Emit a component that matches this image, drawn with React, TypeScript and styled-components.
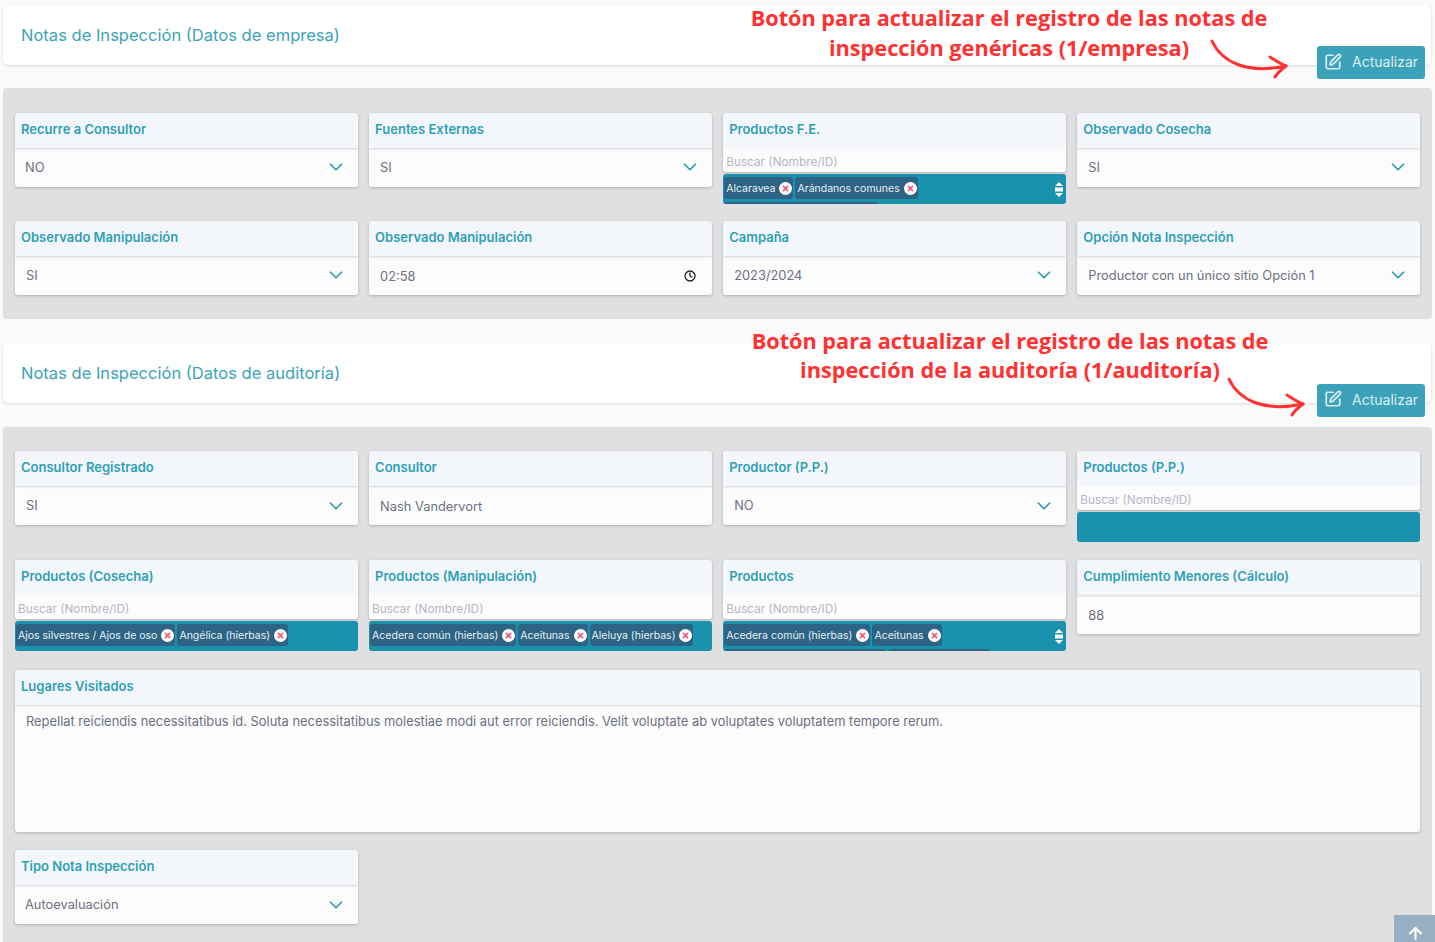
import React from 'react';
import styled, { createGlobalStyle } from 'styled-components';
import { ChevronDown, Clock, SquarePen, ArrowUp } from 'lucide-react';

const Global = createGlobalStyle`
  html, body { margin: 0; padding: 0; height: 942px; overflow: hidden; background: #fafafa; }
  * { box-sizing: border-box; }
  body { font-family: Inter, "Liberation Sans", sans-serif; }
`;

const Page = styled.div`
  height: 942px;
  overflow: hidden;
  padding: 5px 3px 0;
  display: flex;
  flex-direction: column;
  gap: 24px;
`;
const Section = styled.section<{ $gap: number }>`
  position: relative;
  display: flex;
  flex-direction: column;
  gap: ${p => p.$gap}px;
`;
const HeaderCard = styled.header`
  height: 60px;
  width: 1428px;
  padding: 0 6px 0 18px;
  background: #fff;
  border-radius: 5px;
  box-shadow: 0 1px 3px rgba(0, 0, 0, 0.14);
  display: flex;
  align-items: center;
  justify-content: space-between;
`;
const Title = styled.h2`
  margin: 0;
  font-size: 16.55px;
  font-weight: 400;
  color: #3ba3b9;
`;
const UpdateButton = styled.button`
  align-self: flex-end;
  margin-bottom: -14px;
  width: 108px;
  height: 33px;
  border: 0;
  border-radius: 3px;
  padding: 0 0 2px 7px;
  background: #3ba2b9;
  color: #dcedf1;
  font: 400 14px Inter, "Liberation Sans", sans-serif;
  display: flex;
  align-items: center;
  gap: 10px;
  position: relative;
  z-index: 2;
`;
const Panel = styled.div<{ $gap: number }>`
  width: 1429px;
  background: #e0e0e0;
  border-radius: 4px;
  padding: 24.5px 12px 24px;
  display: grid;
  grid-template-columns: repeat(4, minmax(0, 1fr));
  column-gap: 11.4px;
  row-gap: ${p => p.$gap}px;
  align-items: start;
  box-shadow: 0 0 2px rgba(0, 0, 0, 0.06);
`;
const Field = styled.div<{ $wide?: boolean }>`
  ${p => (p.$wide ? 'grid-column: 1 / -1; margin-top: 1px;' : '')}
  display: flex;
  flex-direction: column;
`;
const FieldTop = styled.div`
  border-radius: 3px;
  overflow: hidden;
  box-shadow: 0 1px 3px rgba(0, 0, 0, 0.22);
`;
const Label = styled.div<{ $soft?: boolean }>`
  height: 35px;
  padding: 0 6px;
  background: #f3f7fb;
  color: #2f9fb6;
  font-size: 13px;
  font-weight: 600;
  line-height: 33px;
  position: relative;
  box-shadow: ${p => (p.$soft ? 'none' : '0 1px 2px rgba(0, 0, 0, 0.16)')};
`;
const ValueRow = styled.div<{ $input?: boolean; $pad?: number }>`
  height: 39px;
  background: #fcfcfc;
  padding: ${p => (p.$input ? '2px' : '0')} 11px 0 ${p => p.$pad ?? 11}px;
  display: flex;
  align-items: center;
  justify-content: space-between;
  color: #6e7080;
  font-size: 12.85px;
  font-weight: 400;
  svg { flex: none; }
`;
const SearchRow = styled.div`
  height: 24px;
  background: #fcfcfc;
  padding: 2px 3px 0;
  color: #b6b6c4;
  font-size: 11.8px;
  line-height: 24px;
`;
const TextBody = styled.div`
  height: 127px;
  background: #fcfcfc;
  padding: 8px 11px;
  color: #6e7080;
  font-size: 12.9px;
  line-height: 17px;
`;
const ChipBox = styled.div`
  position: relative;
  height: 30px;
  margin-top: 2px;
  padding: 3px 1px 0;
  background: #1a91ad;
  border-radius: 3px;
  overflow: hidden;
  display: flex;
  flex-wrap: wrap;
  align-content: flex-start;
  gap: 0 2px;
`;
const Chip = styled.span`
  height: 22px;
  margin-bottom: 3px;
  padding: 1px 1px 0 2px;
  background: #2d6385;
  border-radius: 3px;
  color: #e8f1f4;
  font-size: 10.5px;
  display: inline-flex;
  align-items: center;
  gap: 4px;
  white-space: nowrap;
`;
const HiddenChip = styled.span<{ $w: number }>`
  height: 22px;
  width: ${p => p.$w}px;
  background: #2d6385;
  border-radius: 3px;
`;
const Break = styled.span`
  flex-basis: 100%;
  height: 0;
`;
const Spinner = styled.svg`
  position: absolute;
  right: 3px;
  top: 7px;
`;
const Note = styled.div<{ $top: number; $left: number }>`
  position: absolute;
  top: ${p => p.$top}px;
  left: ${p => p.$left}px;
  width: 640px;
  text-align: center;
  color: #ff3131;
  font: 700 21.7px/29.5px "Open Sans", sans-serif;
  z-index: 3;
`;
const NoteArrow = styled.svg<{ $top: number; $left: number }>`
  position: absolute;
  top: ${p => p.$top}px;
  left: ${p => p.$left}px;
  z-index: 3;
`;
const BackTop = styled.div`
  position: fixed;
  right: 0;
  bottom: 0;
  width: 41px;
  height: 27px;
  padding: 9px 0 0 1px;
  background: #98b0c4;
  color: #fff;
  display: flex;
  justify-content: center;
  overflow: hidden;
`;

const Remove = () => (
  <svg width="13" height="13" viewBox="0 0 13 13" style={{ flex: 'none' }}>
    <circle cx="6.5" cy="6.5" r="6.5" fill="#fff" />
    <path d="M4.3 4.3l4.4 4.4M8.7 4.3l-4.4 4.4" stroke="#ef4d73" strokeWidth="1.6" strokeLinecap="round" />
  </svg>
);

const Select = ({ label, value, pad }: { label: string; value: string; pad?: number }) => (
  <Field>
    <FieldTop>
      <Label>{label}</Label>
      <ValueRow $pad={pad}>
        {value}
        <ChevronDown size={22} color="#2a9db5" strokeWidth={1.9} />
      </ValueRow>
    </FieldTop>
  </Field>
);

const Multi = ({ label, chips, hidden, scroll }: { label: string; chips: string[]; hidden?: number[]; scroll?: boolean }) => (
  <Field>
    <FieldTop>
      <Label $soft>{label}</Label>
      <SearchRow>Buscar (Nombre/ID)</SearchRow>
    </FieldTop>
    <ChipBox>
      {chips.map(c => (
        <Chip key={c}>
          {c}
          <Remove />
        </Chip>
      ))}
      {hidden && <Break />}
      {hidden?.map((w, i) => <HiddenChip key={i} $w={w} />)}
      {scroll && (
        <Spinner width="8" height="17" viewBox="0 0 8 17">
          <path d="M4 1l4 4H0z M4 16l4-4H0z" fill="#fff" />
          <rect y="6.5" width="8" height="4" fill="#fff" />
        </Spinner>
      )}
    </ChipBox>
  </Field>
);

const Arrow = ({ top, left }: { top: number; left: number }) => (
  <NoteArrow $top={top} $left={left} width="80" height="42" viewBox="0 0 80 42" fill="none" stroke="#ff3131" strokeWidth="3" strokeLinecap="round" strokeLinejoin="round">
    <path d="M2 2C12 24 38 35 76 27" />
    <path d="M60 18C66 22 71 25 76 27C72 30 68 33 65 38" />
  </NoteArrow>
);

const Update = () => (
  <UpdateButton>
    <SquarePen size={18} strokeWidth={2.3} />
    Actualizar
  </UpdateButton>
);

export default function App() {
  return (
    <Page>
      <Global />
      <Section $gap={23.4}>
        <HeaderCard>
          <Title>Notas de Inspección (Datos de empresa)</Title>
          <Update />
        </HeaderCard>
        <Note $top={-2} $left={686}>
          Botón para actualizar el registro de las notas de
          <br />
          inspección genéricas (1/empresa)
        </Note>
        <Arrow top={34} left={1207} />
        <Panel $gap={17}>
          <Select label="Recurre a Consultor" value="NO" pad={10} />
          <Select label="Fuentes Externas" value="SI" />
          <Multi label="Productos F.E." chips={['Alcaravea', 'Arándanos comunes']} hidden={[154]} scroll />
          <Select label="Observado Cosecha" value="SI" pad={11} />
          <Select label="Observado Manipulación" value="SI" />
          <Field>
            <FieldTop>
              <Label>Observado Manipulación</Label>
              <ValueRow $input>
                02:58
                <Clock size={12} color="#222" strokeWidth={2.6} style={{ marginRight: 5 }} />
              </ValueRow>
            </FieldTop>
          </Field>
          <Select label="Campaña" value="2023/2024" />
          <Select label="Opción Nota Inspección" value="Productor con un único sitio Opción 1" pad={11} />
        </Panel>
      </Section>
      <Section $gap={23.7}>
        <HeaderCard>
          <Title>Notas de Inspección (Datos de auditoría)</Title>
          <Update />
        </HeaderCard>
        <Note $top={-17} $left={687}>
          Botón para actualizar el registro de las notas de
          <br />
          inspección de la auditoría (1/auditoría)
        </Note>
        <Arrow top={34} left={1224} />
        <Panel $gap={18}>
          <Select label="Consultor Registrado" value="SI" />
          <Field>
            <FieldTop>
              <Label>Consultor</Label>
              <ValueRow $input>Nash Vandervort</ValueRow>
            </FieldTop>
          </Field>
          <Select label="Productor (P.P.)" value="NO" />
          <Multi label="Productos (P.P.)" chips={[]} />
          <Multi label="Productos (Cosecha)" chips={['Ajos silvestres / Ajos de oso', 'Angélica (hierbas)']} />
          <Multi label="Productos (Manipulación)" chips={['Acedera común (hierbas)', 'Aceitunas', 'Aleluya (hierbas)']} />
          <Multi label="Productos" chips={['Acedera común (hierbas)', 'Aceitunas']} hidden={[162, 102]} scroll />
          <Field>
            <FieldTop>
              <Label>Cumplimiento Menores (Cálculo)</Label>
              <ValueRow $input>88</ValueRow>
            </FieldTop>
          </Field>
          <Field $wide>
            <FieldTop>
              <Label>Lugares Visitados</Label>
              <TextBody>
                Repellat reiciendis necessitatibus id. Soluta necessitatibus molestiae modi aut error reiciendis. Velit voluptate ab voluptates voluptatem tempore rerum.
              </TextBody>
            </FieldTop>
          </Field>
          <Select label="Tipo Nota Inspección" value="Autoevaluación" pad={10} />
        </Panel>
      </Section>
      <BackTop>
        <ArrowUp size={19} strokeWidth={2.6} />
      </BackTop>
    </Page>
  );
}
